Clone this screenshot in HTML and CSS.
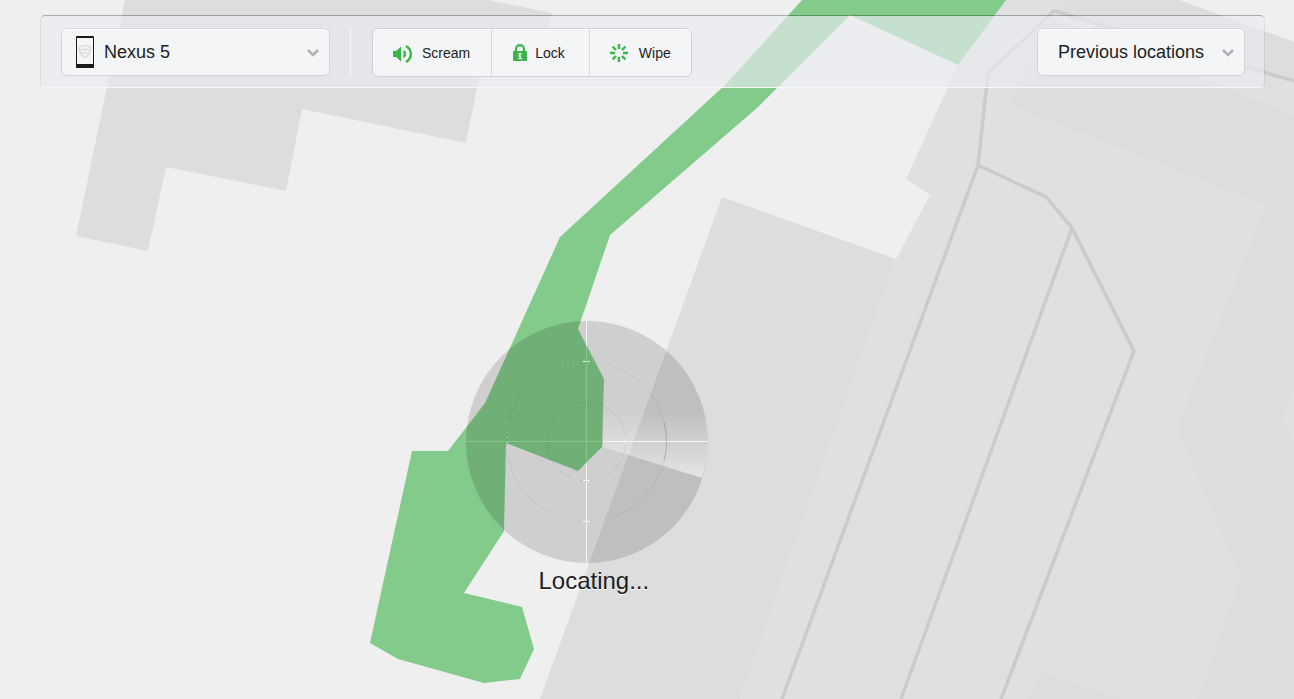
FILE: index.html
```html
<!DOCTYPE html>
<html lang="en">
<head>
<meta charset="UTF-8" />
<meta name="viewport" content="width=device-width, initial-scale=1" />
<title>Find my device</title>
<link rel="stylesheet" href="styles.css">
</head>
<body>
  <!-- Map background -->
  <svg class="map" viewBox="0 0 1294 699" preserveAspectRatio="xMidYMid slice" aria-hidden="true">
    <g class="map-land">
      <polygon points="1006,0 1179,0 1294,42 1294,699 740,699 896,259 930,195 906,179 958,65" />
    </g>
    <g class="map-building">
      <polygon points="125,0 488,0 552,13 541,62 484,52 466,143 302,109 286,191 166,167 148,251 76,236" />
      <polygon points="722,197 896,259 740,699 540,699" />
      <polygon points="1070,0 1179,0 1294,42 1294,81 1054,10" />
      <polygon points="1045,15 1227,88 1294,115 1294,385 1281,418 1294,445 1294,699 1199,699 1240,577 1177,428 1266,205 1010,105" />
      <polygon points="1040,672 1120,699 1028,699" />
    </g>
    <g class="map-road">
      <polyline points="782,699 978,165 988,73 1054,11 1294,81" />
      <polyline points="978,165 1046,197 1072,228 1134,351 1001,699" />
      <polyline points="1072,228 901,699" />
    </g>
    <polygon class="map-park" points="802,0 725,85 560,237 509,350 485,403 448,451 412,451 370,643 398,659 484,683 520,679 534,649 522,607 464,593 504,531 506,443 578,471 602,447 604,379 578,329 610,235 757,108 850,15 958,65 1006,0" />
  </svg>

  <header class="toolbar">
    <div class="select select-device">
      <svg class="phone" viewBox="0 0 18 32" aria-hidden="true">
        <rect width="18" height="32" rx="1" fill="#181a1c" />
        <rect x="1" y="2" width="16" height="26" fill="#f4f5f7" />
        <g fill="none" stroke="#d9dcdd" stroke-width="1.5" stroke-linecap="round">
          <path d="M3.2 11.6C6 8.8 12 8.8 14.8 11.6" />
          <path d="M3.2 11.6C3.4 16.5 5.3 19.8 9 21.6C12.7 19.8 14.6 16.5 14.8 11.6" />
          <path d="M4.5 14.6C7 12.7 11 12.7 13.5 14.6" />
          <path d="M5.9 17.6C7.8 16.3 10.2 16.3 12.1 17.6" />
        </g>
      </svg>
      <select aria-label="Device">
        <option>Nexus 5</option>
      </select>
      <svg class="chevron" viewBox="0 0 12 8" aria-hidden="true"><path d="M1 1L6 6L11 1" /></svg>
    </div>

    <span class="separator"></span>

    <div class="actions">
      <button type="button" class="btn-scream">
        <svg width="20" height="20" viewBox="0 0 20 20" aria-hidden="true">
          <path d="M0 8H3L8 3.5V18.5L3 14H0Z" fill="#39b54a" />
          <path d="M10.5 8C12.5 9.6 12.5 12.4 10.5 14M13 3C19.5 7 19.5 15 13 19" fill="none" stroke="#39b54a" stroke-width="2.4" />
        </svg>
        Scream
      </button>
      <button type="button" class="btn-lock">
        <svg width="14" height="18" viewBox="0 0 14 18" aria-hidden="true">
          <path d="M3 9V5C3 -0.3 11 -0.3 11 5V9" fill="none" stroke="#39b54a" stroke-width="2.2" />
          <rect y="7" width="14" height="10" rx="1" fill="#39b54a" />
          <path d="M5.5 9H8.5V10.5H5.5ZM5.5 11.3H8V14H9V15.2H5.3V14H6.3V12.3H5.5Z" fill="#f3f5f7" />
        </svg>
        Lock
      </button>
      <button type="button" class="btn-wipe">
        <svg width="18" height="18" viewBox="0 0 18 18" aria-hidden="true">
          <path d="M9 0V5M9 13V18M0 9H5M13 9H18M2.6 2.6L6 6M12 12L15.4 15.4M15.4 2.6L12 6M6 12L2.6 15.4" stroke="#39b54a" stroke-width="2.4" />
        </svg>
        Wipe
      </button>
    </div>

    <div class="select select-history">
      <select aria-label="Previous locations">
        <option>Previous locations</option>
      </select>
      <svg class="chevron" viewBox="0 0 12 8" aria-hidden="true"><path d="M1 1L6 6L11 1" /></svg>
    </div>
  </header>

  <!-- Radar, pinned on the map -->
  <main class="locator">
    <svg class="radar" viewBox="0 0 256 242" aria-hidden="true">
      <defs>
        <linearGradient id="sweep" gradientUnits="userSpaceOnUse" x1="0" y1="158" x2="0" y2="90">
          <stop offset="0" stop-color="#fff" stop-opacity=".6" />
          <stop offset="1" stop-color="#fff" stop-opacity="0" />
        </linearGradient>
      </defs>
      <circle cx="121" cy="121" r="121" fill="#000" fill-opacity=".135" />
      <path d="M137 126L236 157A121 121 0 0 0 238 90H138Z" fill="url(#sweep)" />
      <g fill="none" stroke="#000" stroke-opacity=".06">
        <circle cx="120.500" cy="120.500" r="80" />
        <circle cx="120.500" cy="120.500" r="39.500" />
      </g>
      <path d="M198.100 101A80 80 0 0 1 198.100 140" fill="none" stroke="#000" stroke-opacity=".14" />
      <g fill="none" stroke="#fff" stroke-opacity=".6" stroke-dasharray="1 4">
        <path d="M92 45.700A80 80 0 0 1 149 45.700" />
        <path d="M92 195.300A80 80 0 0 0 149 195.300" />
        <path d="M43 101A80 80 0 0 0 43 138" />
        <path d="M107 157.700A39.500 39.500 0 0 0 134 157.700" />
      </g>
      <path d="M120.500 24V242M137 120.500H242M117 159.500H124M117 200.500H124M117 40.500H124M159.500 118V123" stroke="#fff" stroke-opacity=".8" />
      <path d="M120.500 0V24" stroke="#fff" stroke-opacity=".8" />
      <path d="M0 120.500H137" stroke="#82cb8a" />
      <path d="M120.500 25V142" stroke="#82cb8a" />
    </svg>
    <p>Locating...</p>
  </main>
</body>
</html>
```

FILE: styles.css
```css
* {
  box-sizing: border-box;
}
body {
  margin: 0;
  min-height: 100vh;
  position: relative;
  overflow: hidden;
  font-family: "Liberation Sans", Arial, Helvetica, sans-serif;
  color: #1b1d1f;
  background: #efefef;
}

/* Map */
.map {
  position: absolute;
  top: 0;
  left: 0;
  width: 100%;
  height: 100%;
}
.map-land {
  fill: #e0e0e0;
}
.map-building {
  fill: #dddddd;
}
.map-road {
  fill: none;
  stroke: #cbcbcb;
  stroke-width: 3.5;
}
.map-park {
  fill: #82cb8a;
}

/* Toolbar */
.toolbar {
  position: relative;
  display: flex;
  align-items: flex-start;
  gap: 20px;
  margin: 15px 29px 0 40px;
  padding: 12px 19px 10px 20px;
  border: 1px solid rgba(0, 0, 0, 0.07);
  border-top-color: rgba(0, 0, 0, 0.28);
  border-bottom-color: #f8f8f9;
  border-radius: 5px;
  background: rgba(233, 236, 242, 0.66);
  background-clip: padding-box;
}
.select {
  position: relative;
}
.select select {
  appearance: none;
  display: block;
  width: 100%;
  height: 48px;
  margin: 0;
  padding: 0 40px 0 20px;
  border: 1px solid #d2d5d8;
  border-radius: 6px;
  background: #f3f5f7;
  box-shadow: inset 0 1px 0 #fff;
  color: inherit;
  font: inherit;
  font-size: 18px;
  cursor: pointer;
}
.select-device {
  width: 269px;
}
.select-device select {
  padding-left: 42px;
}
.select-history {
  width: 208px;
  margin-left: auto;
}
.phone {
  position: absolute;
  top: 8px;
  left: 15px;
  width: 18px;
  height: 32px;
  pointer-events: none;
}
.chevron {
  position: absolute;
  top: 21px;
  right: 11px;
  width: 12px;
  height: 8px;
  fill: none;
  stroke: #b0b3b5;
  stroke-width: 2.6;
  pointer-events: none;
}
.separator {
  width: 2px;
  height: 48px;
  border-left: 1px solid #f5f6f8;
}
.actions {
  display: flex;
  height: 49px;
  border: 1px solid #ced1d6;
  border-radius: 6px;
  background: #f3f5f7;
  box-shadow: inset 0 1px 0 #fff;
}
.actions button {
  display: flex;
  align-items: center;
  margin: 0;
  border: 0;
  background: none;
  color: inherit;
  font: inherit;
  font-size: 14px;
  cursor: pointer;
}
.actions button + button {
  border-left: 1px solid #d6d9dc;
}
.btn-scream {
  gap: 9px;
  padding: 0 21px 0 20px;
}
.btn-lock {
  gap: 8px;
  padding: 0 24px 0 21px;
}
.btn-wipe {
  gap: 11px;
  padding: 0 20px;
}

/* Locator */
.locator {
  position: absolute;
  top: 321px;
  left: 36%;
  width: 256px;
}
.radar {
  display: block;
  width: 256px;
  height: 242px;
}
.locator p {
  margin: 4px 0 0;
  font-size: 24px;
  line-height: 28px;
  text-align: center;
  text-shadow: 0 1px 0 #fff;
}
```
